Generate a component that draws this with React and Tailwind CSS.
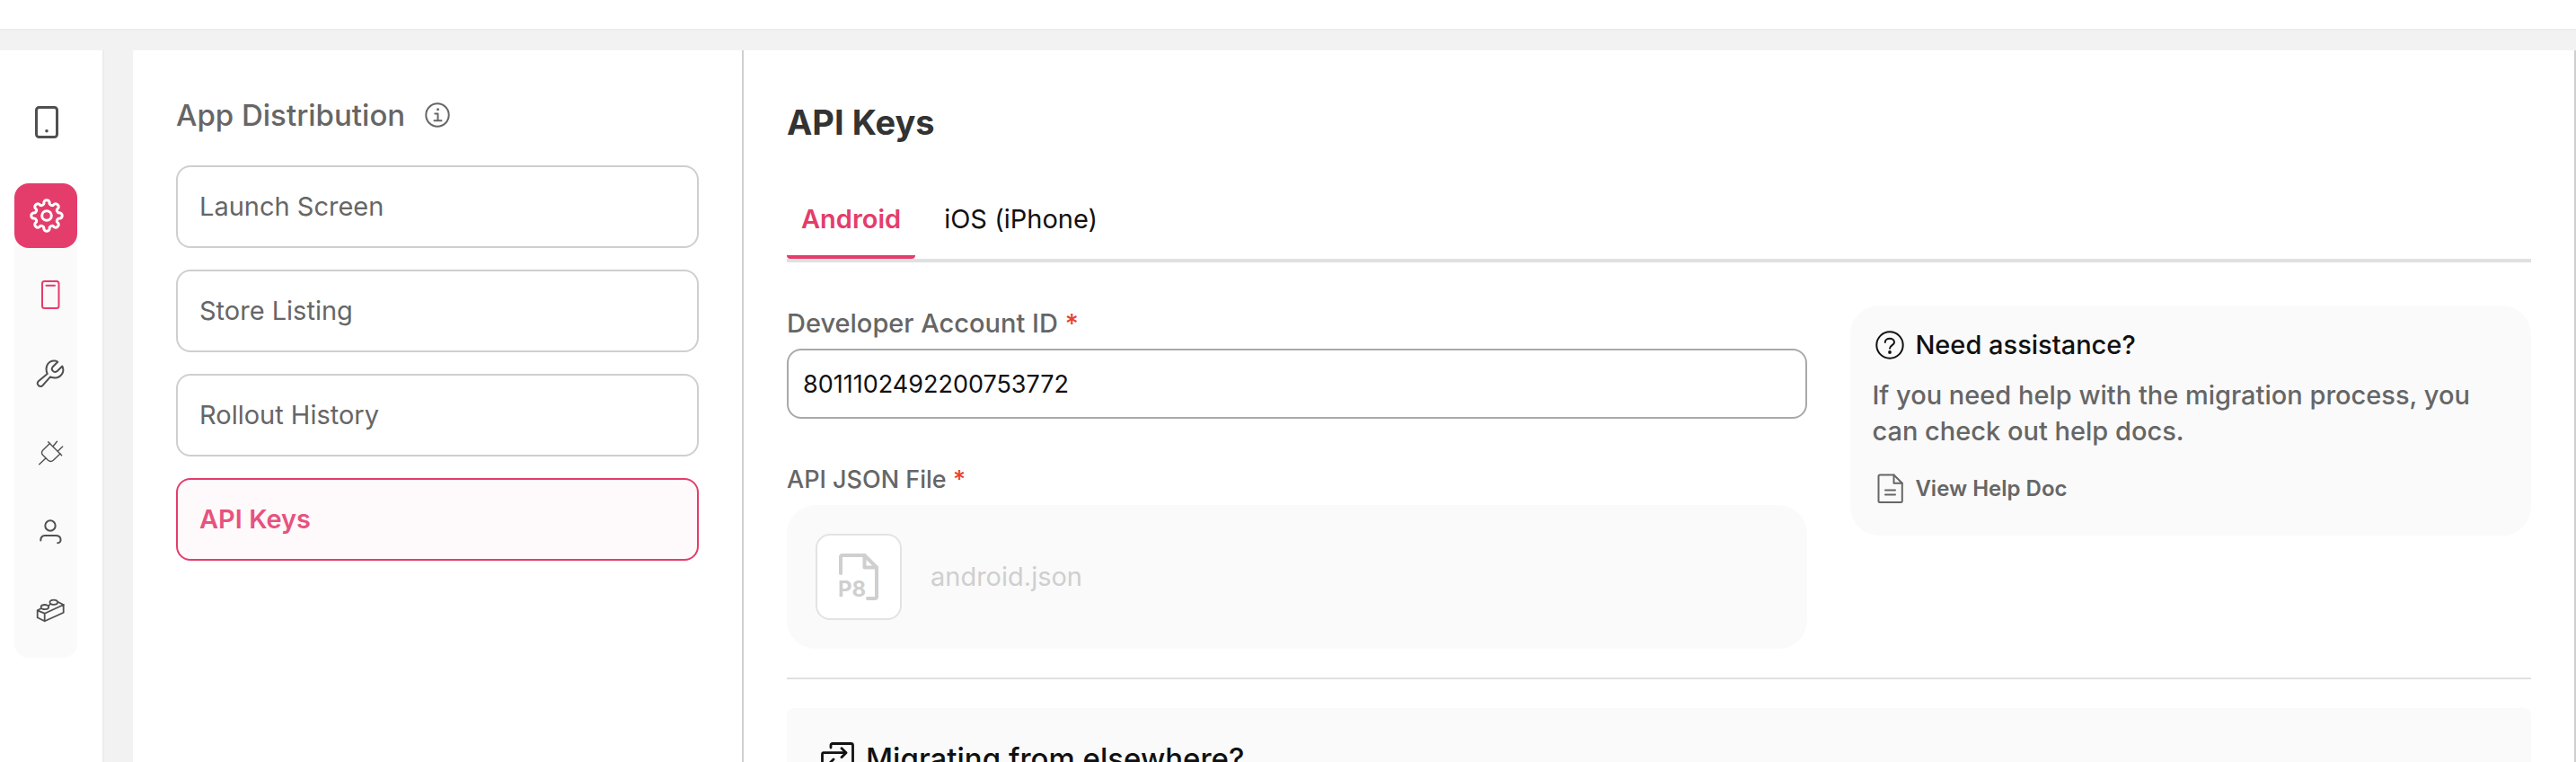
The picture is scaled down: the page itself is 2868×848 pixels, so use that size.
import React, { useState } from "react";

// eight rounded teeth around a 40x40 box
const gearPoint = (deg) => {
  const rad = (deg * Math.PI) / 180;
  return `${(20 + 15.2 * Math.cos(rad)).toFixed(2)} ${(20 + 15.2 * Math.sin(rad)).toFixed(2)}`;
};

const gearPath =
  [0, 45, 90, 135, 180, 225, 270, 315].reduce(
    (d, a) =>
      `${d} A3.3 3.3 0 0 1 ${gearPoint(a + 12)} A2.8 2.8 0 0 0 ${gearPoint(a + 33)}`,
    `M${gearPoint(-12)}`
  ) + " Z";

const Icon = ({ size = 32, stroke = 2, className = "", children }) => (
  <svg
    width={size}
    height={size}
    viewBox={`0 0 ${size} ${size}`}
    fill="none"
    stroke="currentColor"
    strokeWidth={stroke}
    strokeLinecap="round"
    strokeLinejoin="round"
    className={`shrink-0 ${className}`}
    aria-hidden="true"
  >
    {children}
  </svg>
);

const PhoneIcon = () => (
  <Icon size={40} stroke={3}>
    <rect x="8.5" y="3.5" width="23" height="33" rx="3" />
    <circle cx="20" cy="29.7" r="1.8" fill="currentColor" stroke="none" />
  </Icon>
);

const GearIcon = () => (
  <Icon size={40} stroke={3}>
    <path d={gearPath} />
    <circle cx="20" cy="20" r="5.3" />
  </Icon>
);

const DeviceIcon = () => (
  <Icon>
    <rect x="7" y="1" width="18.5" height="30" rx="2.5" />
    <path d="M11.5 5.7h9.5" />
  </Icon>
);

const WrenchIcon = () => (
  <Icon>
    <path d="M12.7 16C9.5 8.5 13.5 1 21 1.5Q23 1.6 24.3 2.7L18.7 8.3C16.3 11 19.5 15.8 23.5 13.2L29.3 7.5C32.8 14.5 27 21.5 19.5 20.3Q17.5 20 16 19.3L7.8 28.7C4.5 32 -0.5 27.5 2.8 24.2Z" />
  </Icon>
);

const PlugIcon = () => (
  <Icon stroke={1.4}>
    <path d="M3.7 28.7L10.9 22.1" />
    <path d="M13.7 3.7L28.7 18.7" />
    <path d="M19 8.7L23.5 3.2M24.4 14.1L29.7 9" />
    <path d="M15.5 5.5L7.5 13.3Q5.5 15.7 7.5 18.3L13.3 24Q16.5 26.7 19.3 24.3L27 17" />
  </Icon>
);

const UserIcon = () => (
  <Icon>
    <circle cx="16" cy="9" r="5.7" />
    <path d="M5.3 25.5C5.3 22 7 20 10 20H22C29 20 29 28.3 24.2 28.3" />
  </Icon>
);

const BrickIcon = () => (
  <Icon stroke={1.8}>
    <path d="M5.5 13.2L1.7 15.3V23.3L9.7 27.3L30.7 17.7V9L9.7 18.7L1.7 15.3M9.7 18.7V27.3" />
    <path d="M14 10.5L15.7 8.5M23.7 5.5L30.7 9" />
    <ellipse cx="9.9" cy="11.6" rx="4.3" ry="2.6" />
    <ellipse cx="19.8" cy="6.3" rx="4.3" ry="2.6" />
  </Icon>
);

const InfoIcon = () => (
  <Icon stroke={2}>
    <circle cx="16" cy="16" r="12.7" />
    <path d="M13.3 14.5H16.5V22M12.5 22.2H20.5" />
    <circle cx="16.5" cy="9.8" r="1.5" fill="currentColor" stroke="none" />
  </Icon>
);

const QuestionIcon = () => (
  <Icon size={40} stroke={2}>
    <circle cx="20" cy="20" r="14.7" />
    <path d="M14.8 17C14.8 11.3 25 11.3 25 17C25 20.3 20 20 20 23.8" />
    <circle cx="20" cy="28" r="1.9" fill="currentColor" stroke="none" />
  </Icon>
);

const DocIcon = () => (
  <Icon size={40} stroke={2}>
    <path d="M9 4.5H24.5L33.8 13.7V33.5Q33.8 35 32.3 35H9Q7.5 35 7.5 33.5V6Q7.5 4.5 9 4.5Z" />
    <path d="M24.5 4.5V13.7H33.8M15 21.5H26M15 26.5H26" />
  </Icon>
);

const P8Icon = () => (
  <Icon size={56} stroke={4} className="text-[#cfcfcf]">
    <path d="M8 24V6Q8 4 10 4H34.5L48 17.5V50Q48 52 46 52H38" />
    <path d="M34.5 4V17.5H48" />
    <text
      x="5"
      y="50"
      fontSize="24"
      fontWeight="700"
      fill="currentColor"
      stroke="none"
    >
      P8
    </text>
  </Icon>
);

const MigrateIcon = () => (
  <Icon size={40} stroke={2.8}>
    <path d="M13 8V5.5Q13 3.5 15 3.5H35.5Q37.5 3.5 37.5 5.5V25Q37.5 27 35.5 27H33.5" />
    <path d="M29.500 13.7H5Q3.500 13.7 3.500 15.7V35Q3.500 37 5.500 37H26.500Q28.500 37 28.500 35V33" />
    <path d="M25 8.7L30 13.7L25 18.7M16 21L11 26L16 31M11 26H33" />
  </Icon>
);

const sideItems = [
  { name: "Device", icon: DeviceIcon, active: true },
  { name: "Tools", icon: WrenchIcon },
  { name: "Integrations", icon: PlugIcon },
  { name: "Account", icon: UserIcon },
  { name: "Blocks", icon: BrickIcon },
];

const menuItems = ["Launch Screen", "Store Listing", "Rollout History", "API Keys"];

const tabs = ["Android", "iOS (iPhone)"];

const Sidebar = () => (
  <nav className="w-[116px] shrink-0 border-r-2 border-[#ececec] bg-white pt-11 pr-7 pl-4">
    <button
      type="button"
      aria-label="App"
      className="flex h-18 w-full items-center justify-center pl-0.5 text-[#505050]"
    >
      <PhoneIcon />
    </button>
    <div className="mt-8 rounded-2xl bg-[#fafafa] pb-2">
      <button
        type="button"
        aria-label="Settings"
        className="flex h-18 w-full items-center justify-center rounded-2xl bg-[#e43d6b] pl-0.5 text-white"
      >
        <GearIcon />
      </button>
      <div className="pt-2">
        {sideItems.map(({ name, icon: ItemIcon, active }) => (
          <button
            key={name}
            type="button"
            aria-label={name}
            className={`flex h-22 w-full items-center justify-center pl-2.5 ${
              active ? "text-[#e43d6b]" : "text-[#505050]"
            }`}
          >
            <ItemIcon />
          </button>
        ))}
      </div>
    </div>
  </nav>
);

const DistributionMenu = () => (
  <aside className="ml-8 w-[680px] shrink-0 border-r-2 border-[#cfcfcf] bg-white p-12">
    <div className="flex items-center gap-5">
      <h2 className="text-[33px] leading-[48px] font-medium text-[#666]">
        App Distribution
      </h2>
      <button type="button" aria-label="Info" className="text-[#666]">
        <InfoIcon />
      </button>
    </div>
    <ul className="mt-8 flex flex-col gap-6">
      {menuItems.map((item) => (
        <li key={item}>
          <a
            href="#"
            className={`flex h-23 items-center rounded-2xl border-2 px-6 text-[29px] leading-10 ${
              item === "API Keys"
                ? "border-[#e43d6b] bg-[#fef9fa] font-semibold text-[#e7527f]"
                : "border-[#cfcfcf] text-[#666]"
            }`}
          >
            {item}
          </a>
        </li>
      ))}
    </ul>
  </aside>
);

const HelpCard = () => (
  <div className="self-start rounded-[32px] bg-[#fafafa] px-6 pt-6 pb-8">
    <div className="flex items-center gap-2 text-[#111]">
      <QuestionIcon />
      <h3 className="text-[29px] leading-10 font-medium">Need assistance?</h3>
    </div>
    <p className="mt-4 text-[29px] leading-10 font-medium text-[#666]">
      If you need help with the migration process, you can check out help docs.
    </p>
    <a href="#" className="mt-6 flex items-center gap-2 text-[#666]">
      <DocIcon />
      <span className="text-2xl leading-10 font-semibold">View Help Doc</span>
    </a>
  </div>
);

const App = () => {
  const [tab, setTab] = useState("Android");
  const [accountId, setAccountId] = useState("8011102492200753772");

  return (
    <div className="flex h-screen flex-col overflow-hidden bg-[#f2f2f2] font-['Inter',sans-serif]">
      <header className="h-[34px] shrink-0 border-b-2 border-[#ececec] bg-white" />
      <div className="mt-[22px] flex min-h-0 flex-1">
        <Sidebar />
        <DistributionMenu />
        <main className="min-w-0 flex-1 overflow-hidden border-r-2 border-[#cfcfcf] bg-white p-12">
          <h1 className="text-[38px] leading-[64px] font-bold text-[#333]">
            API Keys
          </h1>
          <div className="mt-9 flex border-b-4 border-[#e0e0e0]">
            {tabs.map((name) => (
              <button
                key={name}
                type="button"
                onClick={() => setTab(name)}
                className={`mr-4 rounded-sm border-b-4 px-4 py-5 text-[29px] leading-10 ${
                  tab === name
                    ? "border-[#e43d6b] font-semibold text-[#e43d6b]"
                    : "border-transparent text-[#111]"
                }`}
              >
                {name}
              </button>
            ))}
          </div>

          <div className="mt-12 grid grid-cols-[3fr_2fr] gap-12">
            <div>
              <label
                htmlFor="account"
                className="block text-[29px] leading-10 font-medium text-[#666]"
              >
                Developer Account ID <span className="text-[#e8432d]">*</span>
              </label>
              <input
                id="account"
                type="text"
                value={accountId}
                onChange={(e) => setAccountId(e.target.value)}
                className="mt-2 h-[78px] w-full rounded-2xl border-2 border-[#a9a9a9] bg-white px-4 text-[27px] text-[#111]"
              />
              <p className="mt-12 text-[27px] leading-10 font-medium text-[#666]">
                API JSON File <span className="text-[#e8432d]">*</span>
              </p>
              <div className="mt-2 flex items-center gap-8 rounded-[32px] bg-[#fafafa] p-8">
                <div className="flex size-24 items-center justify-center rounded-2xl border-2 border-[#e3e3e3] bg-white">
                  <P8Icon />
                </div>
                <span className="text-[29px] text-[#cfcfcf]">android.json</span>
              </div>
            </div>
            <HelpCard />
          </div>

          <hr className="mt-8 border-t-2 border-[#e0e0e0]" />

          <section className="mt-8 rounded-lg bg-[#fafafa] px-9 py-8">
            <div className="flex items-center gap-3 text-[#111]">
              <MigrateIcon />
              <h2 className="text-[33px] leading-[48px] font-medium">
                Migrating from elsewhere?
              </h2>
            </div>
          </section>
        </main>
      </div>
    </div>
  );
};

export default App;
